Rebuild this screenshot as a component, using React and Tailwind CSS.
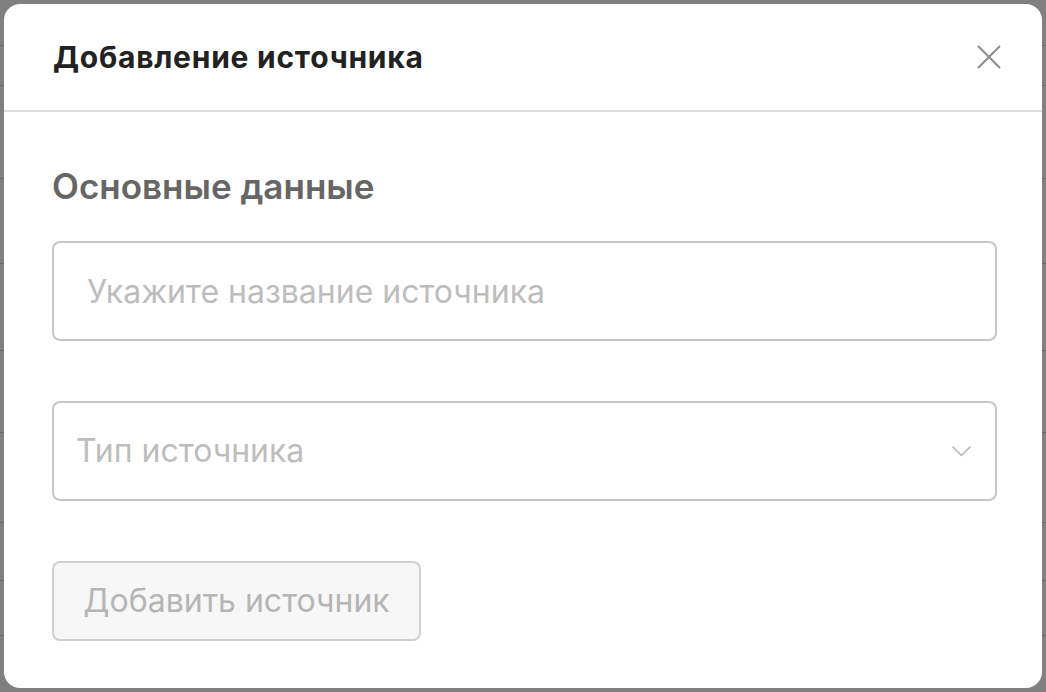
import { useState } from 'react';

const rows = [46, 40, 93, 85, 87, 82, 90, 58, 55, 85];

function CloseIcon() {
  return (
    <svg width="24" height="24" viewBox="0 0 24 24" fill="none" stroke="#8c8c8c" strokeWidth="2" strokeLinecap="round">
      <path d="M1.5 1.5l21 21M22.5 1.5l-21 21" />
    </svg>
  );
}

function Chevron() {
  return (
    <svg width="19" height="11" viewBox="0 0 19 11" fill="none" stroke="#b8b8b8" strokeWidth="1.6" strokeLinecap="round" strokeLinejoin="round">
      <path d="M1 1l8.5 8.5L18 1" />
    </svg>
  );
}

export default function App() {
  const [name, setName] = useState('');

  return (
    <div className="relative w-[1046px] h-[692px] overflow-hidden bg-[#808080]" style={{ fontFamily: 'Inter, "Noto Sans", sans-serif' }}>
      {/* table behind the overlay */}
      <div className="flex flex-col">
        {rows.map((h, i) => (
          <div key={i} className="border-b border-[#6a6a6a]" style={{ height: h }} />
        ))}
      </div>

      <div className="absolute inset-[4px] rounded-[16px] bg-white flex flex-col">
        <div className="h-[108px] flex items-center justify-between pl-[49px] pr-[40px] border-b-2 border-[#dcdcdc]">
          <h2 className="text-[30px] font-bold text-[#222] tracking-[0.75px] leading-[36px]">Добавление источника</h2>
          <button className="w-[26px] h-[26px] flex items-center justify-center">
            <CloseIcon />
          </button>
        </div>

        <div className="flex flex-col pl-[48px] pr-[45px] pt-[54px]">
          <h3 className="text-[35px] font-semibold text-[#666] leading-[40px]">Основные данные</h3>

          <input
            value={name}
            onChange={(e) => setName(e.target.value)}
            placeholder="Укажите название источника"
            className="mt-[35px] h-[100px] w-full rounded-[8px] border-2 border-[#c6c6c6] px-[33px] text-[32px] text-[#333] placeholder:text-[#bdbdbd] outline-none"
          />

          <div className="mt-[60px] h-[100px] w-full rounded-[8px] border-2 border-[#c6c6c6] pl-[22px] pr-[24px] flex items-center justify-between">
            <span className="text-[32px] text-[#bdbdbd]">Тип источника</span>
            <Chevron />
          </div>

          <button
            disabled
            className="mt-[60px] h-[80px] w-[369px] rounded-[8px] border-2 border-[#d0d0d0] bg-[#f7f7f7] text-[32px] text-[#b5b5b5]"
          >
            Добавить источник
          </button>
        </div>
      </div>
    </div>
  );
}
